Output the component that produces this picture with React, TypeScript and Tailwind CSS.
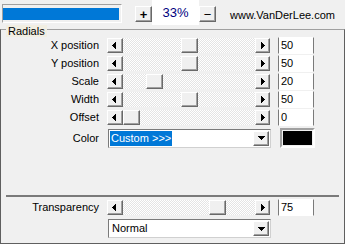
const raised =
  "border border-white border-r-[#696969] border-b-[#696969] shadow-[inset_-1px_-1px_0_#a0a0a0] bg-[#f0f0f0]";

const rows = [
  { label: "X position", value: 50 },
  { label: "Y position", value: 50 },
  { label: "Scale", value: 20 },
  { label: "Width", value: 50 },
  { label: "Offset", value: 0 },
];

function Arrow({ dir }: { dir: "left" | "right" | "down" }) {
  if (dir === "down")
    return (
      <svg width="7" height="4" shapeRendering="crispEdges">
        <polygon points="0,0 7,0 3.5,4" fill="#000" />
      </svg>
    );
  return (
    <svg width="4" height="7" shapeRendering="crispEdges">
      <polygon points={dir === "left" ? "4,0 0,3.5 4,7" : "0,0 4,3.5 0,7"} fill="#000" />
    </svg>
  );
}

function Slider({ value }: { value: number }) {
  // track is 132px, thumb 17px, so 115px of travel
  const offset = Math.round((value / 100) * 115);
  return (
    <div className="flex h-[15px] w-[163px]">
      <div className={`${raised} flex w-[16px] items-center justify-center pr-[2px]`}>
        <Arrow dir="left" />
      </div>
      <div className="flex flex-1 bg-[repeating-conic-gradient(#ffffff_0%_25%,#e4e4e4_0%_50%)] bg-[length:2px_2px]">
        <div className={`${raised} h-full w-[17px]`} style={{ marginLeft: offset }} />
      </div>
      <div className={`${raised} flex w-[15px] items-center justify-center pl-[1px]`}>
        <Arrow dir="right" />
      </div>
    </div>
  );
}

function Field({ value }: { value: number }) {
  return (
    <div className="ml-[8px] flex h-[17px] w-[36px] items-center border-x border-x-[#7a7a7a] border-y border-y-white bg-white pl-[2px] leading-none">
      {value}
    </div>
  );
}

function Combo({ text, selected }: { text: string; selected?: boolean }) {
  return (
    <div className="flex h-[19px] w-[163px] items-center border border-[#7a7a7a] border-r-[#d0d0d0] border-b-[#d0d0d0] bg-white pl-[1px] pr-[1px]">
      <div className="flex-1">
        {selected ? (
          <span className="inline-block bg-[#0078d7] px-[1px] leading-[15px] text-white">{text}</span>
        ) : (
          <span className="pl-[2px]">{text}</span>
        )}
      </div>
      <div className={`${raised} flex h-[15px] w-[16px] items-center justify-center`}>
        <Arrow dir="down" />
      </div>
    </div>
  );
}

export default function App() {
  return (
    <div className="h-[244px] w-[345px] overflow-hidden bg-[#f0f0f0] font-['Liberation_Sans',Arial,sans-serif] text-[11px] text-black">
      {/* top strip */}
      <div className="flex h-[29px] items-start">
        <div className="ml-[2px] mt-[4px] h-[19px] w-[120px] border border-[#a0a0a0] border-r-white border-b-white pt-[3px]">
          <div className="h-[12px] w-[116px] bg-[#0078d7]" />
        </div>
        <div className={`${raised} ml-[13px] mt-[6px] flex h-[16px] w-[17px] items-center justify-center text-[13px] font-bold leading-none`}>
          +
        </div>
        <div className="flex h-[25px] w-[47px] items-center justify-center bg-white text-[13px] text-[#000080]">33%</div>
        <div className={`${raised} mt-[6px] flex h-[16px] w-[17px] items-center justify-center text-[13px] leading-none`}>
          −
        </div>
        <div className="ml-[14px] mt-[7px] text-[11px]">www.VanDerLee.com</div>
      </div>

      {/* Radials group */}
      <div className="relative h-[215px] border border-[#5f5f5f] border-t-[#a0a0a0]">
        <div className="absolute left-[5px] top-[-5px] bg-[#f1eee2] px-[2px] leading-[12px]">Radials</div>

        <div className="flex flex-col gap-[1px] pt-[7px]">
          {rows.map((r) => (
            <div key={r.label} className="flex h-[17px] items-center">
              <div className="w-[98px] text-right">{r.label}</div>
              <div className="ml-[8px]">
                <Slider value={r.value} />
              </div>
              <Field value={r.value} />
            </div>
          ))}
          <div className="mt-[1px] flex h-[20px] items-center">
            <div className="w-[98px] text-right">Color</div>
            <div className="ml-[9px]">
              <Combo text="Custom >>>" selected />
            </div>
            <div className="ml-[9px] h-[20px] w-[35px] border-2 border-[#a0a0a0] border-r-white border-b-white p-[1px]">
              <div className="h-full w-full bg-black" />
            </div>
          </div>
        </div>

        <div className="mx-[5px] mt-[47px] border-t-2 border-[#7a7a7a]" />

        <div className="mt-[2px] flex h-[17px] items-center">
          <div className="w-[98px] text-right">Transparency</div>
          <div className="ml-[8px]">
            <Slider value={75} />
          </div>
          <Field value={75} />
        </div>
        <div className="mt-[3px] flex">
          <div className="ml-[107px]">
            <Combo text="Normal" />
          </div>
        </div>
      </div>
    </div>
  );
}
